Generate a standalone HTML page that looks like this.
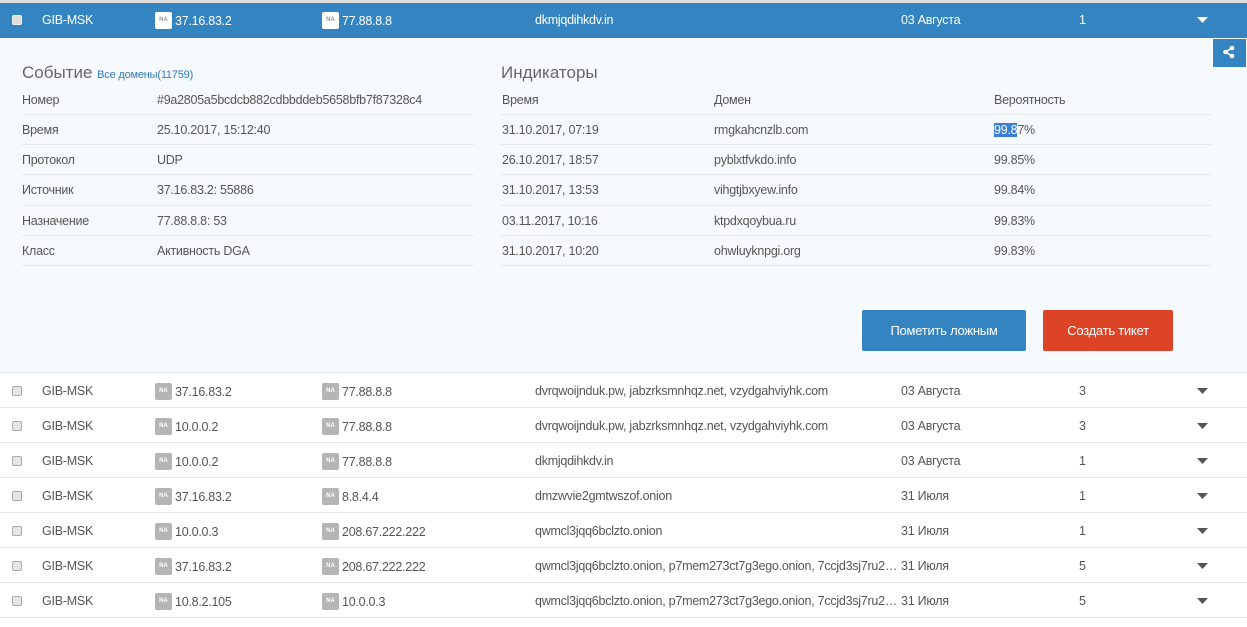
<!DOCTYPE html>
<html><head><meta charset="utf-8">
<style>
*{margin:0;padding:0;box-sizing:border-box}
body{width:1247px;height:627px;overflow:hidden;background:#fff;font-family:"Liberation Sans",Arial,sans-serif;font-size:12.5px;letter-spacing:-0.25px;color:#555;position:relative}
.a{position:absolute;white-space:nowrap}
.f{display:flex;align-items:center;height:17px}
.top{position:absolute;left:0;top:0;width:1247px;height:3px;background:#ddd}
.hdr{position:absolute;left:0;top:3px;width:1247px;height:35px;background:#3384c1;color:#fff}
.panel{position:absolute;left:0;top:38px;width:1247px;height:335px;background:#f6fafd;border-bottom:1px solid #e3e8ec}
.na{display:inline-block;width:17px;height:17px;border-radius:2px;background:#b5b5b5;color:#fff;font-size:6px;letter-spacing:0;font-weight:bold;text-align:center;line-height:17px;margin-right:3px}
.hdr .na{background:#fff;color:#999}
.cb{position:absolute;left:12px;width:10px;height:10px;border:1px solid #aaa;border-radius:2px;background:#e6e6e6}
.hdr .cb{background:#ddd;border-color:#eee}
.row{position:absolute;left:0;width:1247px;height:35px;border-bottom:1px solid #e6e9ec}
.ln{position:absolute;height:1px;background:#e3e8ec}
.btn{position:absolute;color:#fff;font-size:13px;text-align:center;line-height:41px;border-radius:2px}
</style></head><body>
<div class="top"></div>
<div class="hdr">
 <div class="cb" style="top:12px"></div>
 <div class="a" style="left:42px;top:10px">GIB-MSK</div>
 <div class="a f" style="left:155px;top:9px"><span class="na">NA</span>37.16.83.2</div>
 <div class="a f" style="left:322px;top:9px"><span class="na">NA</span>77.88.8.8</div>
 <div class="a" style="left:535px;top:10px">dkmjqdihkdv.in</div>
 <div class="a" style="left:901px;top:10px">03 Августа</div>
 <div class="a" style="left:1079px;top:10px">1</div>
 <svg class="a" style="left:1197px;top:14px" width="11" height="7"><path d="M0 0h11L5.5 6z" fill="#fff"/></svg>
</div>
<div class="panel">
 <div class="a" style="left:1213px;top:1px;width:33px;height:28px;background:#3384c1"></div>
 <svg class="a" style="left:1222px;top:7px" width="14" height="14"><circle cx="10" cy="3" r="2.3" fill="#fff"/><circle cx="3.5" cy="7" r="2.3" fill="#fff"/><circle cx="10" cy="11" r="2.3" fill="#fff"/><path d="M10 3L3.5 7L10 11" stroke="#fff" stroke-width="1.6" fill="none"/></svg>
 <div class="a" style="left:22px;top:25px;font-size:17px;color:#666;letter-spacing:0">Событие <span style="font-size:11px;color:#2f7cc0;letter-spacing:-0.2px">Все домены(11759)</span></div>
 <div class="a" style="left:501px;top:25px;font-size:17px;color:#666;letter-spacing:0">Индикаторы</div>
</div>
<div class="a" style="left:22px;top:93px">Номер</div><div class="a" style="left:157px;top:93px">#9a2805a5bcdcb882cdbbddeb5658bfb7f87328c4</div>
<div class="ln" style="left:22px;top:114px;width:452px"></div>
<div class="a" style="left:22px;top:123px">Время</div><div class="a" style="left:157px;top:123px">25.10.2017, 15:12:40</div>
<div class="ln" style="left:22px;top:144px;width:452px"></div>
<div class="a" style="left:22px;top:153px">Протокол</div><div class="a" style="left:157px;top:153px">UDP</div>
<div class="ln" style="left:22px;top:174px;width:452px"></div>
<div class="a" style="left:22px;top:183px">Источник</div><div class="a" style="left:157px;top:183px">37.16.83.2: 55886</div>
<div class="ln" style="left:22px;top:205px;width:452px"></div>
<div class="a" style="left:22px;top:214px">Назначение</div><div class="a" style="left:157px;top:214px">77.88.8.8: 53</div>
<div class="ln" style="left:22px;top:235px;width:452px"></div>
<div class="a" style="left:22px;top:244px">Класс</div><div class="a" style="left:157px;top:244px">Активность DGA</div>
<div class="ln" style="left:22px;top:265px;width:452px"></div>
<div class="a" style="left:502px;top:93px">Время</div><div class="a" style="left:714px;top:93px">Домен</div><div class="a" style="left:994px;top:93px">Вероятность</div>
<div class="ln" style="left:501px;top:114px;width:710px"></div>
<div class="a" style="left:502px;top:123px">31.10.2017, 07:19</div><div class="a" style="left:714px;top:123px">rmgkahcnzlb.com</div><div class="a" style="left:994px;top:123px"><span style="background:#3a7fd6;color:#fff">99.8</span>7%</div>
<div class="ln" style="left:501px;top:144px;width:710px"></div>
<div class="a" style="left:502px;top:153px">26.10.2017, 18:57</div><div class="a" style="left:714px;top:153px">pyblxtfvkdo.info</div><div class="a" style="left:994px;top:153px">99.85%</div>
<div class="ln" style="left:501px;top:174px;width:710px"></div>
<div class="a" style="left:502px;top:183px">31.10.2017, 13:53</div><div class="a" style="left:714px;top:183px">vihgtjbxyew.info</div><div class="a" style="left:994px;top:183px">99.84%</div>
<div class="ln" style="left:501px;top:205px;width:710px"></div>
<div class="a" style="left:502px;top:214px">03.11.2017, 10:16</div><div class="a" style="left:714px;top:214px">ktpdxqoybua.ru</div><div class="a" style="left:994px;top:214px">99.83%</div>
<div class="ln" style="left:501px;top:235px;width:710px"></div>
<div class="a" style="left:502px;top:244px">31.10.2017, 10:20</div><div class="a" style="left:714px;top:244px">ohwluyknpgi.org</div><div class="a" style="left:994px;top:244px">99.83%</div>
<div class="ln" style="left:501px;top:265px;width:710px"></div>
<div class="btn" style="left:862px;top:310px;width:164px;height:41px;background:#3384c1">Пометить ложным</div>
<div class="btn" style="left:1043px;top:310px;width:130px;height:41px;background:#dc4327">Создать тикет</div>

<div id="rows"></div>
<script>
var d=[["37.16.83.2","77.88.8.8","dvrqwoijnduk.pw, jabzrksmnhqz.net, vzydgahviyhk.com","03 Августа","3"],
["10.0.0.2","77.88.8.8","dvrqwoijnduk.pw, jabzrksmnhqz.net, vzydgahviyhk.com","03 Августа","3"],
["10.0.0.2","77.88.8.8","dkmjqdihkdv.in","03 Августа","1"],
["37.16.83.2","8.8.4.4","dmzwvie2gmtwszof.onion","31 Июля","1"],
["10.0.0.3","208.67.222.222","qwmcl3jqq6bclzto.onion","31 Июля","1"],
["37.16.83.2","208.67.222.222","qwmcl3jqq6bclzto.onion, p7mem273ct7g3ego.onion, 7ccjd3sj7ru2…","31 Июля","5"],
["10.8.2.105","10.0.0.3","qwmcl3jqq6bclzto.onion, p7mem273ct7g3ego.onion, 7ccjd3sj7ru2…","31 Июля","5"]];
var h="";
d.forEach(function(r,i){var t=373+i*35;
h+='<div class="row" style="top:'+t+'px"><div class="cb" style="top:13px"></div>'+
'<div class="a" style="left:42px;top:11px">GIB-MSK</div>'+
'<div class="a f" style="left:155px;top:10px"><span class="na">NA</span>'+r[0]+'</div>'+
'<div class="a f" style="left:322px;top:10px"><span class="na">NA</span>'+r[1]+'</div>'+
'<div class="a" style="left:535px;top:11px">'+r[2]+'</div>'+
'<div class="a" style="left:901px;top:11px">'+r[3]+'</div>'+
'<div class="a" style="left:1079px;top:11px">'+r[4]+'</div>'+
'<svg class="a" style="left:1197px;top:15px" width="11" height="7"><path d="M0 0h11L5.5 6z" fill="#555"/></svg></div>';});
document.getElementById("rows").innerHTML=h;
</script>
</body></html>
